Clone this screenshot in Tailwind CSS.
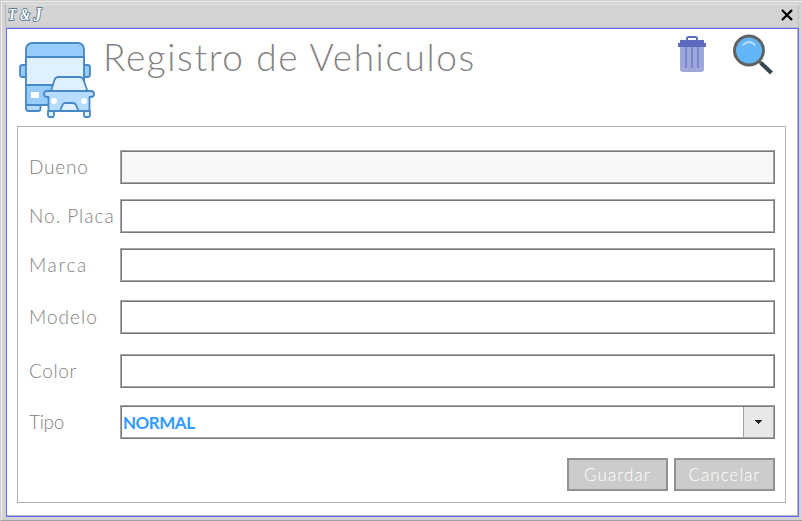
<!DOCTYPE html>
<html lang="es">
<head>
<meta charset="utf-8">
<title>Registro de Vehiculos</title>
<script src="https://cdn.jsdelivr.net/npm/@tailwindcss/browser@4"></script>
</head>
<body class="w-[802px] h-[521px] overflow-hidden bg-[#d3d3d3] font-['Lato','Open_Sans',sans-serif] text-[#828282]">
<div class="w-[802px] h-[521px] flex flex-col border-t border-l border-b border-t-[#cfcfcf] border-l-[#cfcfcf] border-b-[#a0a0a0]">
  <div class="flex-1 min-h-0 flex flex-col border-t border-l border-[#ededed] pl-[3px] pt-[2px] pr-[3px] pb-[3px]">
    <!-- title bar -->
    <header class="h-[24px] shrink-0 flex items-start justify-between border-t border-l border-r border-b border-t-[#e2e2e2] border-l-[#bdbdbd] border-r-[#bdbdbd] border-b-[#b9b9b9]">
      <svg class="w-[40px] h-[22px] overflow-visible" viewBox="5 5 40 22" font-family="Liberation Serif, serif" font-style="italic" font-weight="bold">
        <g fill="#fff" stroke="#5f8095" stroke-width="2" paint-order="stroke" stroke-linejoin="round">
          <text x="7" y="20" font-size="17" textLength="8" lengthAdjust="spacingAndGlyphs">T</text>
          <text x="19" y="20" font-size="16" textLength="10" lengthAdjust="spacingAndGlyphs">&amp;</text>
          <text x="32.500" y="21" font-size="18" textLength="8" lengthAdjust="spacingAndGlyphs">J</text>
        </g>
      </svg>
      <svg class="w-[12px] h-[12px] mt-[4px] mr-[5px]" viewBox="0 0 12 12" fill="none" stroke="#000" stroke-width="2.3"><path d="M1 1L11 11M11 1L1 11"/></svg>
    </header>
    <!-- window content -->
    <main class="flex-1 min-h-0 ml-px border border-[#6565ff] bg-white">
      <div class="w-full h-full border-r border-b border-[#b9b9b9] flex flex-col pl-[10px] pr-[11px]">
        <div class="h-[97px] shrink-0 flex items-start">
          <svg class="w-[78px] h-[80px] mt-[11px] shrink-0" viewBox="17 40 78 80" stroke="#4788c7" stroke-width="1.800" stroke-linejoin="round">
            <rect x="20" y="65" width="9" height="12" rx="2.500" fill="#98ccfd"/>
            <rect x="82" y="65" width="8" height="12" rx="2.500" fill="#98ccfd"/>
            <path d="M26 105h14.500v3.500a2.500 2.500 0 0 1-2.500 2.500h-9.500a2.500 2.500 0 0 1-2.500-2.500z" fill="#b6dcfe"/>
            <path d="M26 105V49a6 6 0 0 1 6-6h46a6 6 0 0 1 6 6v56z" fill="#98ccfd"/>
            <path d="M26 57h58v28H26z" fill="#dff0fe"/>
            <path d="M31 92h8v6h-8z" fill="#fff" stroke="none"/>
            <path d="M48 111h6v4.500q0 1.500-1.500 1.500h-3q-1.500 0-1.500-1.500zM84 111h6v4.500q0 1.500-1.500 1.500h-3q-1.500 0-1.500-1.500z" fill="#dff0fe"/>
            <path d="M51 91l3.500-11q1-3 4-3h21q3 0 4 3l4 11z" fill="#dff0fe"/>
            <path d="M48.500 111V97H47a3 3 0 0 1 0-6h44a3 3 0 0 1 0 6h-1.500v14z" fill="#b6dcfe"/>
            <path d="M60 111l2.500-6q.8-2 3-2h7.500q2 0 3 2l2.500 6z" fill="#dff0fe"/>
            <circle cx="54" cy="101" r="3" fill="#fff" stroke="none"/><circle cx="84" cy="101" r="3" fill="#fff" stroke="none"/>
          </svg>
          <h1 class="ml-[8px] mt-[6px] w-[390px] text-[37px] leading-[44px] font-light tracking-[1.600px] whitespace-nowrap">Registro de Vehiculos</h1>
          <svg class="w-[28px] h-[37px] ml-[185px] mt-[7px] shrink-0" viewBox="0 0 28 37">
            <path d="M8 4.500V3q0-3 3-3h6q3 0 3 3v1.500h-2V2H10v2.500z" fill="#5c6bc0"/>
            <path d="M2 10h24v23q0 3-3 3H5q-3 0-3-3z" fill="#9fa8da"/>
            <path d="M2 4h24v3h2v4H0V7h2z" fill="#5c6bc0"/>
            <path d="M7 11h2v21H7zM13 11h2v21h-2zM19 11h2v21h-2z" fill="#7986cb"/>
          </svg>
          <svg class="w-[42px] h-[42px] ml-[26px] mt-[4px] shrink-0" viewBox="0 0 42 42">
            <path d="M25 26l5 5" stroke="#616161" stroke-width="3.200"/>
            <path d="M29 30l10.500 10" stroke="#37474f" stroke-width="4.200"/>
            <circle cx="17" cy="17.500" r="14.500" fill="#64b5f6" stroke="#616161" stroke-width="3"/>
            <path d="M10.500 12.500q6.500-7 13 0" fill="none" stroke="#bbdefb" stroke-width="1.800"/>
          </svg>
        </div>
        <form class="w-[769px] h-[377px] border border-[#b0b0b0] pl-[11px] pr-[10px] pt-[23px] text-[19px] font-light">
          <div class="flex h-[34px] mb-[15px]"><label class="w-[91px] shrink-0 leading-[34px] whitespace-nowrap tracking-[0.800px]">Dueno</label><div class="flex-1 border border-t-[#a6a6a6] border-l-[#a6a6a6] border-b-[#787878] border-r-[#787878]"><div class="h-full bg-[#f7f7f7] border border-t-[#787878] border-l-[#787878] border-b-[#a6a6a6] border-r-[#a6a6a6]"></div></div></div>
          <div class="flex h-[34px] mb-[15px]"><label class="w-[91px] shrink-0 leading-[34px] whitespace-nowrap tracking-[1px]">No. Placa</label><div class="flex-1 border border-t-[#a6a6a6] border-l-[#a6a6a6] border-b-[#787878] border-r-[#787878]"><div class="h-full border border-t-[#787878] border-l-[#787878] border-b-[#a6a6a6] border-r-[#a6a6a6]"></div></div></div>
          <div class="flex h-[34px] mb-[18px]"><label class="w-[91px] shrink-0 leading-[34px] whitespace-nowrap tracking-[1.700px]">Marca</label><div class="flex-1 border border-t-[#a6a6a6] border-l-[#a6a6a6] border-b-[#787878] border-r-[#787878]"><div class="h-full border border-t-[#787878] border-l-[#787878] border-b-[#a6a6a6] border-r-[#a6a6a6]"></div></div></div>
          <div class="flex h-[34px] mb-[20px]"><label class="w-[91px] shrink-0 leading-[34px] whitespace-nowrap tracking-[1px]">Modelo</label><div class="flex-1 border border-t-[#a6a6a6] border-l-[#a6a6a6] border-b-[#787878] border-r-[#787878]"><div class="h-full border border-t-[#787878] border-l-[#787878] border-b-[#a6a6a6] border-r-[#a6a6a6]"></div></div></div>
          <div class="flex h-[34px] mb-[17px]"><label class="w-[91px] shrink-0 leading-[34px] whitespace-nowrap tracking-[0.600px]">Color</label><div class="flex-1 border border-t-[#a6a6a6] border-l-[#a6a6a6] border-b-[#787878] border-r-[#787878]"><div class="h-full border border-t-[#787878] border-l-[#787878] border-b-[#a6a6a6] border-r-[#a6a6a6]"></div></div></div>
          <div class="flex h-[34px] mb-[19px]"><label class="w-[91px] shrink-0 leading-[34px] whitespace-nowrap tracking-[-0.300px]">Tipo</label><div class="flex-1 border border-t-[#a6a6a6] border-l-[#a6a6a6] border-b-[#787878] border-r-[#787878]"><div class="h-full flex justify-between border border-t-[#787878] border-l-[#787878] border-b-[#a6a6a6] border-r-[#a6a6a6]">
            <span class="pl-px text-[17px] leading-[31px] font-bold tracking-[-0.500px] text-[#3399ff]">NORMAL</span>
            <span class="w-[30px] bg-[#e8e8e8] border-l border-[#a0a0a0] flex items-center justify-center"><svg class="w-[7px] h-[4px]" viewBox="0 0 7 4" fill="#222" shape-rendering="crispEdges"><path d="M0 0h7v1H6v1H5v1H4v1H3V3H2V2H1V1H0z"/></svg></span>
          </div></div></div>
          <div class="flex justify-end gap-[6px]">
            <button type="button" class="w-[101px] h-[33px] border-2 border-[#919191] bg-[#cccccc] text-white text-[17px] leading-[29px] tracking-[1.100px]">Guardar</button>
            <button type="button" class="w-[101px] h-[33px] border-2 border-[#919191] bg-[#cccccc] text-white text-[17px] leading-[29px] tracking-[1px]">Cancelar</button>
          </div>
        </form>
      </div>
    </main>
  </div>
</div>
</body>
</html>
